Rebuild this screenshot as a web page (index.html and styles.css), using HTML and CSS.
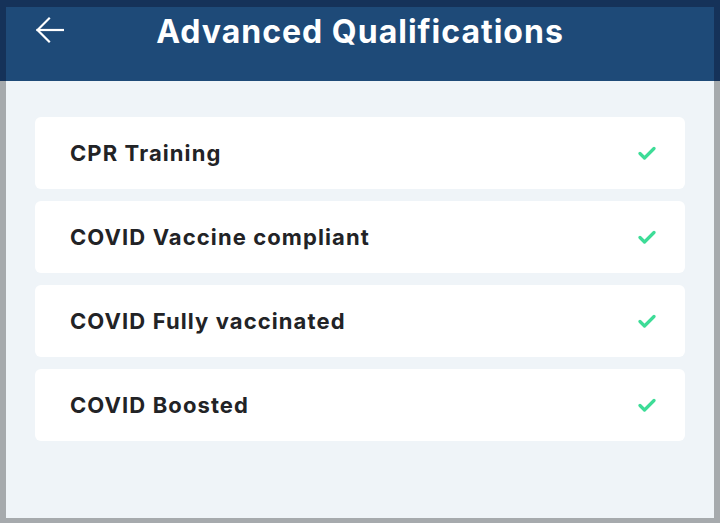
FILE: index.html
```html
<!DOCTYPE html>
<html>
<head>
<meta charset="utf-8">
<link rel="stylesheet" href="styles.css">
</head>
<body>
<div class="frame">
  <div class="app">
    <header class="header">
      <button class="back" aria-label="Back">
        <svg width="28" height="28" viewBox="0 0 28 28" fill="none" stroke="#fff" stroke-width="2.2" stroke-linecap="square">
          <path d="M1.5 14 H27"/>
          <path d="M13 2.5 L1.5 14 L13 25.5"/>
        </svg>
      </button>
      <h1 class="title">Advanced Qualifications</h1>
    </header>
    <main class="list">
      <div class="card"><span class="label">CPR Training</span><svg class="check" width="18" height="14" viewBox="0 0 18 14"><path d="M2 7.5 L6.5 12 L16 2.5" fill="none" stroke="#3ddc97" stroke-width="3.2" stroke-linecap="round" stroke-linejoin="round"/></svg></div>
      <div class="card"><span class="label">COVID Vaccine compliant</span><svg class="check" width="18" height="14" viewBox="0 0 18 14"><path d="M2 7.5 L6.5 12 L16 2.5" fill="none" stroke="#3ddc97" stroke-width="3.2" stroke-linecap="round" stroke-linejoin="round"/></svg></div>
      <div class="card"><span class="label">COVID Fully vaccinated</span><svg class="check" width="18" height="14" viewBox="0 0 18 14"><path d="M2 7.5 L6.5 12 L16 2.5" fill="none" stroke="#3ddc97" stroke-width="3.2" stroke-linecap="round" stroke-linejoin="round"/></svg></div>
      <div class="card"><span class="label">COVID Boosted</span><svg class="check" width="18" height="14" viewBox="0 0 18 14"><path d="M2 7.5 L6.5 12 L16 2.5" fill="none" stroke="#3ddc97" stroke-width="3.2" stroke-linecap="round" stroke-linejoin="round"/></svg></div>
    </main>
  </div>
</div>
</body>
</html>
```
FILE: styles.css
```css
html, body {
  margin: 0;
  padding: 0;
}
body {
  width: 720px;
  height: 523px;
  overflow: hidden;
  background: #a6aaad;
  font-family: Inter, "Noto Sans", sans-serif;
}
.frame {
  box-sizing: border-box;
  width: 720px;
  height: 523px;
  padding: 7px 6px 5px 6px;
  background: linear-gradient(to bottom, #153259 0, #153259 81px, #a6aaad 81px);
}
.app {
  height: 100%;
  background: #eff4f8;
  display: flex;
  flex-direction: column;
}
.header {
  height: 74px;
  flex: none;
  background: #1e4a78;
  display: flex;
  align-items: flex-start;
  justify-content: center;
  position: relative;
}
.back {
  position: absolute;
  left: 29px;
  top: 8px;
  width: 30px;
  height: 30px;
  padding: 0;
  border: 0;
  background: none;
  display: flex;
  align-items: center;
  justify-content: center;
}
.title {
  margin: 0;
  padding-top: 5px;
  color: #fff;
  font-size: 32px;
  font-weight: 700;
  line-height: 40px;
  letter-spacing: 1px;
}
.list {
  padding: 36px 29px 0 29px;
  display: flex;
  flex-direction: column;
  gap: 12px;
}
.card {
  height: 72px;
  background: #fff;
  border-radius: 6px;
  display: flex;
  align-items: center;
  justify-content: space-between;
  padding: 0 29px 0 35px;
}
.label {
  color: #222326;
  font-size: 22px;
  font-weight: 700;
  letter-spacing: 1.1px;
}
.check {
  display: block;
}
```
